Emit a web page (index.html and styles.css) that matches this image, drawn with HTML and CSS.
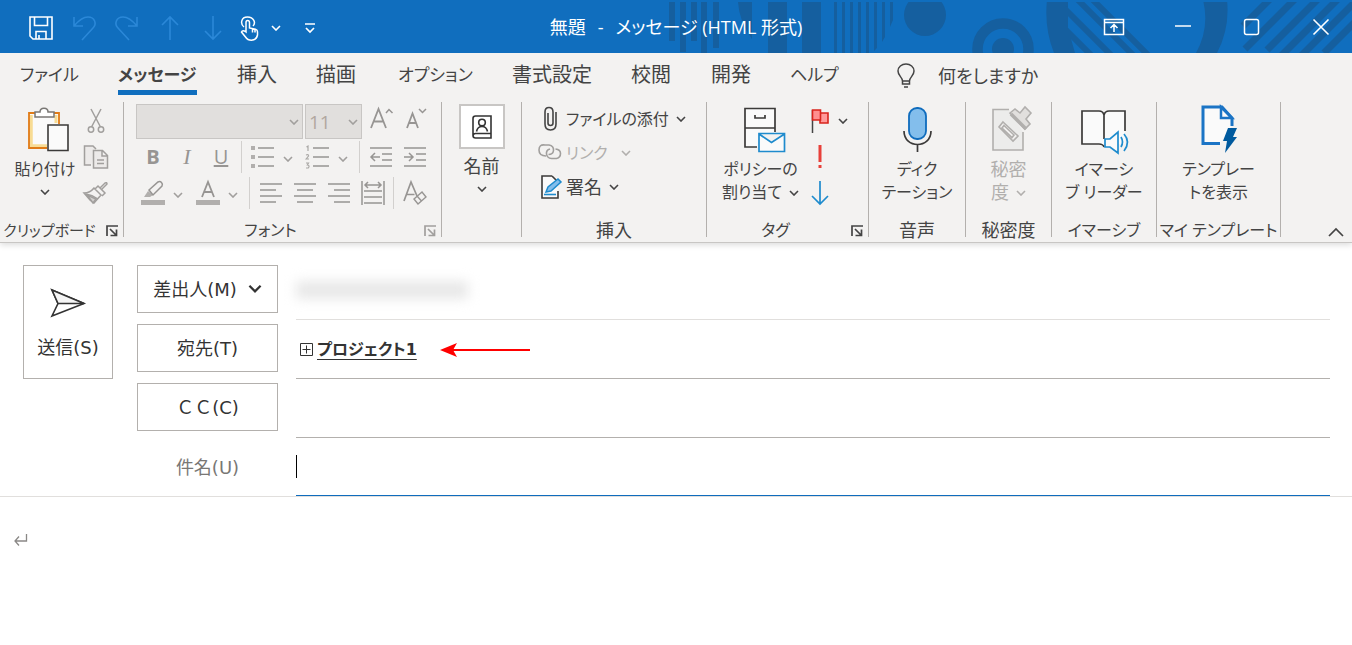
FILE: index.html
```html
<!DOCTYPE html>
<html lang="ja">
<head>
<meta charset="utf-8">
<title>無題 - メッセージ (HTML 形式)</title>
<link rel="stylesheet" href="styles.css">
</head>
<body>
<svg class="defs" aria-hidden="true">
  <symbol id="chev" viewBox="0 0 10 6"><path d="M1 1l4 4 4-4" fill="none" stroke="currentColor" stroke-width="1.600"/></symbol>
  <symbol id="launch" viewBox="0 0 12 12"><path d="M1 11V1h11M4 4l6 6M10.500 4.500v6h-6" fill="none" stroke="currentColor" stroke-width="1.700"/></symbol>
</svg>

<header class="titlebar">
  <svg class="pattern" viewBox="660 0 692 53" width="692" height="53" aria-hidden="true">
    <defs><clipPath id="bar"><path d="M660 2h692v51H660z"/></clipPath></defs>
    <g clip-path="url(#bar)" fill="#155f9f" stroke="none">
      <path d="M669 2h6v39h-6zM680 2h6v50h-6zM691 2h6v39h-6zM701 2h6v51h-6zM713 2h6v46h-6zM738 2h14v37q-13-18-14-37zM768 2h19v51h-19zM802 2h19v51h-19z"/>
      <path d="M834 2h3v51h-3zM842 2h3v51h-3zM850 2h3v51h-3zM858 2h3v51h-3zM866 2h3v51h-3zM874 2h3v46l-3 3zM882 2h3v35l-3 5zM890 2h3v18l-3 7z"/>
      <circle cx="925" cy="15" r="21"/>
      <circle cx="1003" cy="49" r="25.500" fill="none" stroke="#155f9f" stroke-width="10.500"/>
      <circle cx="1003" cy="49" r="11"/>
      <path d="M1047 0h21v28l7 25h-21q-10-25-7-53z"/>
      <path d="M1203 0q7 28-7 53h21q13-25 10-53z"/>
      <g fill="none" stroke="#155f9f" stroke-width="6">
        <path d="M1064 8l50 50M1074-4l60 60M1089-4l60 60M1066 30l28 28"/>
        <path d="M1273-4l-30 30M1298-4l-53 53M1321-4l-54 54M1341-4l-60 60M1364-7l-63 63M1374 3l-50 50" stroke-width="7"/>
      </g>
    </g>
  </svg>
  <div class="quick">
    <button aria-label="上書き保存"><svg width="26" height="26" viewBox="0 0 26 26" fill="none" stroke="#fff" stroke-width="1.600"><path d="M2 2h22v22H5l-3-3zM6.500 2v8.500h13V2M8 24v-7.500h10V24M11 20v4"/></svg></button>
    <button class="dim" aria-label="元に戻す"><svg width="26" height="26" viewBox="0 0 26 26" fill="none" stroke="currentColor" stroke-width="1.600"><path d="M3 2v9h9M3 11c5-6 9-9 14-9 7 0 9 7 5 11L11 25"/></svg></button>
    <button class="dim" aria-label="やり直し"><svg width="26" height="26" viewBox="0 0 26 26" fill="none" stroke="currentColor" stroke-width="1.600"><path d="M23 2v9h-9M23 11c-5-6-9-9-14-9-7 0-9 7-5 11l11 12"/></svg></button>
    <button class="dim" aria-label="前のアイテム"><svg width="26" height="26" viewBox="0 0 26 26" fill="none" stroke="currentColor" stroke-width="1.600"><path d="M13 25V2M5 10l8-8 8 8"/></svg></button>
    <button class="dim" aria-label="次のアイテム"><svg width="26" height="26" viewBox="0 0 26 26" fill="none" stroke="currentColor" stroke-width="1.600"><path d="M13 1v23M5 16l8 8 8-8"/></svg></button>
    <button class="touch" aria-label="タッチ/マウス モードの切り替え"><svg width="22" height="26" viewBox="0 0 22 26" fill="none" stroke="#fff" stroke-width="1.500"><path d="M5 12C1 9 2 2 8.500 2S17 8 14 11"/><path d="M7 17V7.500q0-2 1.700-2t1.800 2V13l6 1.200q2 .500 2 2.500v3.300q-1 5-6 5.200-4 0-6-3.200l-4-5q1-2.500 4.500 0zM13.500 13.500v4M16 14v3.500"/></svg><svg class="chev"><use href="#chev"/></svg></button>
    <button class="custom" aria-label="クイック アクセス ツール バーのユーザー設定"><svg width="12" height="12" viewBox="0 0 12 12" fill="none" stroke="#fff" stroke-width="1.700"><path d="M1 2h10M2 6l4 4 4-4"/></svg></button>
  </div>
  <h1 class="title"><span>無題</span><span>-</span><span>メッセージ (HTML 形式)</span></h1>
  <div class="winctl">
    <button aria-label="リボンの表示オプション"><svg width="22" height="18" viewBox="0 0 22 18" fill="none" stroke="#fff" stroke-width="1.500"><path d="M1.500 1.500h19v15h-19zM1.500 4.500h19M11 14V7M7.500 10L11 6.500 14.500 10"/></svg></button>
    <button aria-label="最小化"><svg width="18" height="18" viewBox="0 0 18 18" stroke="#fff" stroke-width="1.500"><path d="M1 8h16"/></svg></button>
    <button aria-label="最大化"><svg width="18" height="18" viewBox="0 0 18 18" fill="none" stroke="#fff" stroke-width="1.500"><rect x="1.500" y="1.500" width="14" height="15" rx="2"/></svg></button>
    <button aria-label="閉じる"><svg width="18" height="18" viewBox="0 0 18 18" stroke="#fff" stroke-width="1.600"><path d="M1.500 1.500l15 15M16.500 1.500l-15 15"/></svg></button>
  </div>
</header>

<nav class="tabs">
  <button class="kana">ファイル</button>
  <button class="kana active">メッセージ</button>
  <button>挿入</button>
  <button>描画</button>
  <button class="kana">オプション</button>
  <button>書式設定</button>
  <button>校閲</button>
  <button>開発</button>
  <button class="kana">ヘルプ</button>
  <button class="tell"><svg width="20" height="26" viewBox="0 0 20 26" fill="none" stroke="#444" stroke-width="1.500"><path d="M6.500 18c0-4-4.500-5-4.500-10a8 7 0 0 1 16 0c0 5-4.500 6-4.500 10zM6.500 18v3h7v-3M8 24h4"/></svg><span>何をしますか</span></button>
</nav>

<section class="ribbon">
  <div class="group">
    <div class="body clip">
      <button class="big paste">
        <svg class="pic" width="44" height="48" viewBox="-3 -1 44 48" fill="none"><path d="M3.500 7.500h29v34h-29z" fill="#fafafa"/><path d="M5 9v31h16" stroke="#f8dc94" stroke-width="3.500"/><path d="M30 9v8" stroke="#f8dc94" stroke-width="3"/><path d="M9 7H3v35h18M27 7h6v11" stroke="#e07b16" stroke-width="1.800"/><path d="M9 11V6h5c0-5 8-5 8 0h6v5z" fill="#fff" stroke="#797774" stroke-width="1.500"/><path d="M22 19h20v25.500H22z" fill="#fafafa" stroke="#3b3a39" stroke-width="1.600"/></svg>
        <span>貼り付け</span><svg class="chev"><use href="#chev"/></svg>
      </button>
      <div class="col off">
        <button aria-label="切り取り"><svg width="24" height="26" viewBox="0 0 24 26" fill="none" stroke="currentColor" stroke-width="1.500"><path d="M7 1l9.500 18M17 1L7.500 19"/><circle cx="7" cy="21.500" r="2.700"/><circle cx="17" cy="21.500" r="2.700"/></svg></button>
        <button aria-label="コピー"><svg width="26" height="26" viewBox="0 0 26 26" fill="#eceae9" stroke="currentColor" stroke-width="1.500"><path d="M8 21H1.500V2H10l3 3"/><path d="M10.500 6.500h9l5 5v12.500h-14zM19 6.500v5.500h5.500M14 16h7M14 19.500h7"/></svg></button>
        <button aria-label="書式のコピー"><svg width="26" height="24" viewBox="0 0 26 24" fill="none" stroke="currentColor" stroke-width="1.500"><path d="M11 7l7 7-7 8-4-3-6-7q6 0 10-5zM12 8l3-3 7 7-3 3M17 7l5-5q2-1 2 1l-5 5M3 13q6 1 12 5"/><path d="M4 14l9 4-3 4z" fill="#d2d0ce"/></svg></button>
      </div>
    </div>
    <div class="cap"><span class="tight">クリップボード</span><button class="launch" aria-label="クリップボードの設定"><svg><use href="#launch"/></svg></button></div>
  </div>

  <div class="group">
    <div class="body font off">
      <div class="row pick">
        <label class="sel family"><select disabled aria-label="フォント"><option></option></select><svg class="chev"><use href="#chev"/></svg></label>
        <label class="sel size"><select disabled aria-label="フォント サイズ"><option>11</option></select><svg class="chev"><use href="#chev"/></svg></label>
        <button class="ib" aria-label="フォント サイズの拡大"><svg width="26" height="26" viewBox="0 0 26 26" fill="none" stroke="#979593" stroke-width="1.800"><path d="M3 22L10.500 3 18 22M6 15.500h9"/><path d="M18 7l3-3.500L24.500 7" stroke-width="1.500"/></svg></button>
        <button class="ib" aria-label="フォント サイズの縮小"><svg width="26" height="26" viewBox="0 0 26 26" fill="none" stroke="#979593" stroke-width="1.800"><path d="M5 22l5.500-14.500L16 22M7 17h7"/><path d="M17 3l3.500 3.500L24 3" stroke-width="1.500"/></svg></button>
      </div>
      <div class="row">
        <button class="ib biu bold">B</button><button class="ib biu italic">I</button><button class="ib biu under">U</button>
        <i class="sep"></i>
        <span class="split"><button class="ib" aria-label="箇条書き"><svg width="24" height="24" viewBox="1 0 24 24" fill="none" stroke="#979593" stroke-width="1.500"><path d="M8 3h16M8 12h16M8 21h16"/><path d="M1 1h4v4H1zM1 10h4v4H1zM1 19h4v4H1z" fill="#b1afad" stroke="none"/></svg></button><button class="drop" aria-label="箇条書きの種類"><svg class="chev"><use href="#chev"/></svg></button></span>
        <span class="split"><button class="ib" aria-label="段落番号"><svg width="24" height="24" viewBox="1 0 24 24" fill="none" stroke="#979593" stroke-width="1.500"><path d="M8 3h16M8 12h16M8 21h16"/><path d="M1.500 2l1.500-1v5M1 10q3-1 2.500 1L1.200 14H4M1 18h2.500L2.300 20q3 .500 1 3H1" stroke="#aaa8a6" stroke-width="1.200"/></svg></button><button class="drop" aria-label="段落番号の種類"><svg class="chev"><use href="#chev"/></svg></button></span>
        <i class="sep"></i>
        <button class="ib" aria-label="インデントを減らす"><svg width="22" height="22" viewBox="0 0 22 22" fill="none" stroke="#979593" stroke-width="1.500"><path d="M0 2h22M12 8h10M12 14h10M0 20h22M1 11h9M5 7l-4 4 4 4"/></svg></button>
        <button class="ib" aria-label="インデントを増やす"><svg width="22" height="22" viewBox="0 0 22 22" fill="none" stroke="#979593" stroke-width="1.500"><path d="M0 2h22M12 8h10M12 14h10M0 20h22M0 11h9M5 7l4 4-4 4"/></svg></button>
      </div>
      <div class="row">
        <span class="split"><button class="ib" aria-label="蛍光ペンの色"><svg width="26" height="26" viewBox="0 0 26 26" fill="none" stroke="#979593" stroke-width="1.500"><path d="M1 20h24v5H1z" fill="#b1afad" stroke="none"/><path d="M4 17l4-6 5 4-3 2z" fill="#b1afad" stroke="none"/><path d="M9 10l9-8q2-1 3.500.500T22 6l-9 9z"/></svg></button><button class="drop" aria-label="蛍光ペンの色を選ぶ"><svg class="chev"><use href="#chev"/></svg></button></span>
        <span class="split"><button class="ib" aria-label="フォントの色"><svg width="26" height="26" viewBox="0 0 26 26" fill="none" stroke="#979593" stroke-width="1.800"><path d="M1 20h24v5H1z" fill="#b1afad" stroke="none"/><path d="M7 17l6-15 6 15M9 12h8"/></svg></button><button class="drop" aria-label="フォントの色を選ぶ"><svg class="chev"><use href="#chev"/></svg></button></span>
        <i class="sep"></i>
        <button class="ib" aria-label="左揃え"><svg width="22" height="22" viewBox="0 0 22 22" stroke="#979593" stroke-width="1.500"><path d="M0 2h22M0 8h16M0 14h22M0 20h16"/></svg></button>
        <button class="ib" aria-label="中央揃え"><svg width="22" height="22" viewBox="0 0 22 22" stroke="#979593" stroke-width="1.500"><path d="M0 2h22M3 8h16M0 14h22M3 20h16"/></svg></button>
        <button class="ib" aria-label="右揃え"><svg width="22" height="22" viewBox="0 0 22 22" stroke="#979593" stroke-width="1.500"><path d="M0 2h22M6 8h16M0 14h22M6 20h16"/></svg></button>
        <button class="ib" aria-label="均等割り付け"><svg width="24" height="26" viewBox="0 0 24 26" fill="none" stroke="#979593" stroke-width="1.500"><path d="M1 1v24M23 1v24M3 11h18M3 17h18M3 23h18M4 5h16M7 2L4 5l3 3M17 2l3 3-3 3"/></svg></button>
        <i class="sep"></i>
        <button class="ib" aria-label="書式のクリア"><svg width="26" height="26" viewBox="0 0 26 26" fill="none" stroke="#979593" stroke-width="1.700"><path d="M2 21L9 2l6 14M4.500 14.500h8"/><path d="M12 19l8-7 4 5-8 7zM15 16l4.500 5" stroke-width="1.400"/></svg></button>
      </div>
    </div>
    <div class="cap"><span>フォント</span><button class="launch pale" aria-label="フォントの設定"><svg><use href="#launch"/></svg></button></div>
  </div>

  <div class="group">
    <div class="body">
      <button class="big names">
        <span class="card"><svg width="22" height="26" viewBox="0 0 22 26" fill="none" stroke="#333" stroke-width="1.600"><path d="M20 19.500V2H4.500Q2 2 2 4.500v17Q2 24 4.500 24H20v-4.500H4.500Q2 19.500 2 22"/><circle cx="11" cy="8.500" r="3.300"/><path d="M5.500 17.500q1-5 5.500-5t5.500 5"/></svg></span>
        <span class="han">名前</span><svg class="chev"><use href="#chev"/></svg>
      </button>
    </div>
    <div class="cap"></div>
  </div>

  <div class="group">
    <div class="body list">
      <button><svg width="24" height="26" viewBox="0 0 24 26" fill="none" stroke="#444" stroke-width="1.600"><path d="M10 7v10q0 2.500 2.500 2.500T15 17V6q0-4.500-4-4.500T7 6v12q0 6 5.500 6T18 18V6"/></svg><span>ファイルの添付</span><svg class="chev"><use href="#chev"/></svg></button>
      <button class="faint"><svg width="24" height="20" viewBox="0 0 24 20" fill="none" stroke="#a19f9d" stroke-width="1.600"><path d="M8 13q-7 0-7-6t6-5h4q5 1 4.500 5.500-.500 4-5 4M12 6q-4 1-3.500 5 .500 4 5 4.500h5q4-1 4-5t-5-4.500"/></svg><span>リンク</span><svg class="chev gap"><use href="#chev"/></svg></button>
      <button><svg width="24" height="26" viewBox="0 0 24 26" fill="none"><path d="M4.500 2h9l6 6v15.500h-15z" fill="#fafafa"/><path d="M14 2H4v22h16v-7M14 2l5 5" stroke="#3b3a39" stroke-width="1.600"/><path d="M6 20.500h12" stroke="#1e8bcd" stroke-width="1.600"/><path d="M8 18l2-5L20 5l3 3L13 17z" fill="#83beec" stroke="#1e8bcd" stroke-width="1.500"/></svg><span class="han">署名</span><svg class="chev"><use href="#chev"/></svg></button>
    </div>
    <div class="cap"><span class="han">挿入</span></div>
  </div>

  <div class="group">
    <div class="body tags">
      <button class="big">
        <svg class="pic" width="44" height="48" viewBox="-3 1 44 48" fill="none" stroke="#3b3a39" stroke-width="1.700"><path d="M3 4.500h30V43H3z" fill="#fafafa" stroke="none"/><path d="M33 28V4.500H3V43h12M3 24h30M13 11v3h10v-3"/><path d="M16 29h27v19H16z" fill="#f3f2f1" stroke="none"/><path d="M17 29.500h25.500V47.500H17zM17 30l12.500 8.500L42.500 30" fill="#fafafa" stroke="#1e8bcd"/></svg>
        <span>ポリシーの</span><span class="line">割り当て<svg class="chev"><use href="#chev"/></svg></span>
      </button>
      <div class="col">
        <button class="flag" aria-label="フォローアップ"><svg width="20" height="26" viewBox="0 0 20 26"><path d="M2.500 2v23" stroke="#444" stroke-width="1.500"/><path d="M10 5h8v10h-8z" fill="#ff9a9a" stroke="#d9241c" stroke-width="1.600"/><path d="M2.500 2h8v10h-8z" fill="#ff8f8f" stroke="#d9241c" stroke-width="1.600"/></svg><svg class="chev"><use href="#chev"/></svg></button>
        <button aria-label="重要度 - 高"><svg width="20" height="26" viewBox="0 0 20 26" fill="#e8403a"><path d="M8.500 1h3v17h-3zM8.500 21h3v3h-3z"/></svg></button>
        <button aria-label="重要度 - 低"><svg width="20" height="26" viewBox="0 0 20 26" fill="none" stroke="#1e8bcd" stroke-width="1.700"><path d="M10 1v23M2 16l8 8 8-8"/></svg></button>
      </div>
    </div>
    <div class="cap"><span>タグ</span><button class="launch" aria-label="タグの設定"><svg><use href="#launch"/></svg></button></div>
  </div>

  <div class="group">
    <div class="body">
      <button class="big"><svg class="pic" width="44" height="48" viewBox="0 0 44 48" fill="none"><rect x="14" y="3" width="17" height="31" rx="8" fill="#83beec" stroke="#0f6cbd" stroke-width="1.800"/><path d="M9 26c0 18 27 18 27 0M22.500 39.500V47" stroke="#3b3a39" stroke-width="1.700"/></svg><span>ディク</span><span>テーション</span></button>
    </div>
    <div class="cap"><span class="han">音声</span></div>
  </div>

  <div class="group">
    <div class="body">
      <button class="big faint"><svg class="pic" width="44" height="48" viewBox="-1 0 44 48" fill="none" stroke="#b1afad" stroke-width="1.600"><path d="M21 4.500H5V45h30V27" fill="#ececeb"/><path d="M15 17l15 14-5 5-14-14zM16 20.500l10 9.500-2 2.500-10-9.500z" fill="#f3f2f1"/><path d="M22 8l5-4 5 4 5-6 6 6-5 6 4 5-5 5z" fill="#e1dfdd"/><path d="M23 9l15 15" stroke-width="3.500"/></svg><span class="han">秘密</span><span class="line han">度<svg class="chev"><use href="#chev"/></svg></span></button>
    </div>
    <div class="cap"><span class="han">秘密度</span></div>
  </div>

  <div class="group">
    <div class="body">
      <button class="big"><svg class="pic" width="48" height="48" viewBox="0 0 48 48" fill="none" stroke="#3b3a39" stroke-width="1.700"><path d="M24 42q-2-3-5-3H2V6h17q4 0 5 4 1-4 5-4h16v33h-16q-4 0-5 3z" fill="#fafafa" stroke="none"/><path d="M24 34V10q-1-4-5-4H2v33h17q4 0 5 3M24 10q1-4 5-4h16v20"/><path d="M25 34h5l8-7v21l-8-6h-5z" fill="#fafafa" stroke="#1e8bcd"/><path d="M41 32q3 5 0 10M44 29q7 8 0 17" stroke="#1e8bcd"/></svg><span>イマーシ</span><span>ブ リーダー</span></button>
    </div>
    <div class="cap"><span>イマーシブ</span></div>
  </div>

  <div class="group">
    <div class="body">
      <button class="big"><svg class="pic" width="44" height="48" viewBox="0 1 44 48" fill="none"><path d="M23 39.500H6V3h19l10 11v8" fill="#fafafa" stroke="#1b74c5" stroke-width="3"/><path d="M24 3v11h11z" stroke="#1b74c5" stroke-width="2.500"/><path d="M31 24h9l-4 9h4L28 49l2-12h-4z" fill="#005a9e"/></svg><span>テンプレー</span><span>トを表示</span></button>
    </div>
    <div class="cap"><span>マイ テンプレート</span></div>
  </div>

  <button class="fold" aria-label="リボンを折りたたむ"><svg width="16" height="10" viewBox="0 0 16 10" fill="none" stroke="#444" stroke-width="1.700"><path d="M1 9l7-7 7 7"/></svg></button>
</section>

<main>
  <form class="compose">
    <button type="button" class="send"><svg width="36" height="30" viewBox="0 0 36 30" fill="#f5f5f5" stroke="#333" stroke-width="1.600"><path d="M2 2l32 13.500L2 28l6-12.500z" fill="#fff"/><path d="M2 2l6 13.500h26z"/></svg><span>送信(S)</span></button>
    <div class="lines">
      <div class="field first"><button type="button" class="pill">差出人(M)<svg class="chev wide"><use href="#chev"/></svg></button><div class="value"><span class="masked" aria-label="差出人のアドレス"></span></div></div>
      <div class="field"><button type="button" class="pill">宛先(T)</button><div class="value">
        <svg width="13" height="13" viewBox="0 0 13 13" fill="none" stroke="#333"><path d="M.5.5h12v12H.5zM6.500 2.500v8M2.500 6.500h8"/></svg>
        <a class="to" href="#project">プロジェクト1</a>
        <svg class="arrow" width="92" height="16" viewBox="0 0 92 16"><path d="M14 9h77" stroke="#f00" stroke-width="2"/><path d="M1 9L18 2l-4 7 4 7z" fill="#f00"/></svg>
      </div></div>
      <div class="field"><button type="button" class="pill">ＣＣ(C)</button><div class="value"></div></div>
      <div class="field last"><label for="subject">件名(U)</label><div class="value"><i class="caret"></i><input id="subject" type="text"></div></div>
    </div>
  </form>
  <div class="message"><svg width="14" height="12" viewBox="0 0 14 12" fill="none" stroke="#8a8886" stroke-width="1.300"><path d="M12.500 0v7H1M5 2.500L1 7l4 4.500"/></svg></div>
</main>
</body>
</html>
```

FILE: styles.css
```css
* { box-sizing: border-box; }

body {
  margin: 0;
  background: #fff;
  color: #444;
  font-family: "Open Sans", "Noto Sans CJK JP", sans-serif;
  font-size: 16px;
  font-feature-settings: "palt";
}

button {
  margin: 0;
  padding: 0;
  border: 0;
  background: none;
  color: inherit;
  font: inherit;
  font-feature-settings: inherit;
}

svg { display: block; flex: none; overflow: visible; }
.defs { position: absolute; width: 0; height: 0; }
.chev { width: 10px; height: 6px; }
.han { font-size: 18px; }

/* Title bar */
.titlebar {
  position: relative;
  display: grid;
  grid-template-columns: 1fr auto 1fr;
  align-items: center;
  height: 53px;
  background: #106ebe;
  color: #fff;
}
.pattern { position: absolute; top: 0; right: 0; overflow: hidden; }
.quick, .title, .winctl { position: relative; }
.quick { display: flex; align-items: center; gap: 17px; padding: 3px 0 0 28px; }
.quick .dim { color: #2b88d8; }
.touch { display: flex; align-items: center; gap: 10px; margin-left: -4px; }
.custom { margin-left: 6px; }
.title {
  display: flex;
  gap: 12px;
  margin: 0;
  font-size: 18px;
  font-weight: 400;
  line-height: 24px;
  white-space: nowrap;
}
.winctl { display: flex; justify-content: flex-end; }
.winctl button { display: grid; place-items: center; width: 69px; height: 53px; }
.winctl button:last-child { width: 62px; margin-left: 4px; }

/* Tabs */
.tabs {
  position: relative;
  z-index: 1;
  display: grid;
  grid-template-columns: 98px 119px 79px 82px 114px 119px 80px 79px 106px 1fr;
  height: 49px;
  padding-left: 20px;
  background: #f3f2f1;
}
.tabs button {
  justify-self: start;
  align-self: start;
  height: 42px;
  font-size: 20px;
  line-height: 44px;
  text-align: left;
  white-space: nowrap;
}
.tabs .kana { font-size: 17px; }
.tabs .active { border-bottom: 5px solid #106ebe; font-weight: 700; }
.tabs .tell { display: flex; align-items: center; gap: 22px; height: 45px; font-size: 18px; }

/* Ribbon */
.ribbon {
  display: grid;
  grid-template-columns: 124px 318px 80px 185px 162px 97px 86px 105px 124px 1fr;
  padding-bottom: 5px;
  border-bottom: 1px solid #c8c6c4;
  background: #f3f2f1;
  box-shadow: 0 2px 6px #00000024;
}
.group {
  display: flex;
  flex-direction: column;
  justify-content: space-between;
  height: 135px;
  border-right: 1px solid #b3b0ad;
}
.body { display: flex; justify-content: center; }
.cap { display: flex; height: 14px; line-height: 14px; white-space: nowrap; }
.cap > span { flex: 1; text-align: center; }
.cap .tight { font-size: 15px; }
.launch { width: 24px; padding: 1px 5px 0 7px; }
.launch svg { width: 12px; height: 12px; }
.pale { color: #a19f9d; }

.big {
  display: flex;
  flex-direction: column;
  align-items: center;
  padding-top: 3px;
  line-height: 23px;
  white-space: nowrap;
}
.big .pic { margin-bottom: 5px; }
.big > .chev { margin-top: 8px; }
.big.names { padding-top: 2px; }
.line { display: flex; align-items: center; gap: 7px; }
.faint { color: #b1afad; }

.clip { justify-content: flex-start; gap: 7px; padding-left: 14px; }
.paste { width: 62px; }
.col { display: flex; flex-direction: column; padding-top: 1px; }
.col button { display: flex; align-items: center; justify-content: center; width: 26px; height: 36px; }
.off { color: #a19f9d; }

.font { flex-direction: column; padding: 2px 0 0 12px; }
.row { display: flex; align-items: center; height: 36px; }
.row.pick { align-items: flex-start; height: 35px; }
.sel { display: grid; align-items: center; margin-right: 2px; }
.sel > * { grid-area: 1 / 1; }
.sel .chev { justify-self: end; margin-right: 4px; }
.sel select {
  appearance: none;
  width: 100%;
  height: 35px;
  padding: 0 3px;
  border: 1px solid #c8c6c4;
  border-radius: 0;
  background: #e1dfdd;
  color: #b1a79f;
  font: inherit;
  font-size: 19px;
  opacity: 1;
}
.family { width: 167px; }
.size { width: 57px; }
.ib { display: grid; place-items: center; width: 34px; height: 30px; }
.biu { color: #979593; font-size: 20px; line-height: 28px; }
.bold { font-weight: 700; }
.italic { font-family: "Liberation Serif", serif; font-style: italic; font-size: 22px; }
.under { text-decoration: underline; }
.split { display: flex; align-items: center; margin-right: 5px; }
.drop { display: grid; place-items: center; width: 16px; height: 30px; padding-top: 4px; }
.sep { width: 1px; height: 32px; margin: 0 4px 0 3px; background: #d2d0ce; }

.card {
  display: grid;
  place-items: center;
  width: 46px;
  height: 45px;
  margin-bottom: 6px;
  border: 2px solid #c8c6c4;
  background: #fff;
}

.list { flex-direction: column; padding-left: 16px; }
.list button { display: flex; align-items: center; gap: 4px; height: 34px; line-height: 24px; white-space: nowrap; }
.list .chev { margin-left: 3px; }
.list .gap { margin-left: 9px; }

.tags { justify-content: flex-start; gap: 11px; padding-left: 15px; }
.tags .col button { width: 40px; justify-content: flex-start; gap: 8px; }
.fold { align-self: end; justify-self: end; padding: 0 8px 0 0; }

/* Message header */
.compose {
  display: grid;
  grid-template-columns: 90px 1fr;
  gap: 24px;
  padding: 18px 22px 0 23px;
  border-bottom: 1px solid #e1dfdd;
  color: #333;
  font-family: "DejaVu Sans", "Noto Sans CJK JP", sans-serif;
  font-size: 18px;
  font-feature-settings: normal;
}
.send {
  display: flex;
  flex-direction: column;
  align-items: center;
  justify-content: center;
  gap: 18px;
  height: 114px;
  margin-top: 4px;
  padding-top: 4px;
  border: 1px solid #b3b0ad;
  line-height: 24px;
}
.field { display: grid; grid-template-columns: 141px 1fr; gap: 18px; height: 59px; }
.pill {
  display: flex;
  align-items: center;
  justify-content: center;
  gap: 11px;
  height: 48px;
  margin-top: 4px;
  padding-bottom: 2px;
  border: 1px solid #b3b0ad;
}
.wide { width: 14px; height: 9px; }
.value { display: flex; align-items: center; border-bottom: 1px solid #b3b0ad; }
.first .value { border-color: #e1dfdd; }
.last { height: 58px; }
.last label { align-self: center; padding-bottom: 3px; color: #797775; text-align: center; }
.last .value { border-color: #0f6cbd; }
.masked {
  width: 172px;
  height: 18px;
  background: #e8e8e8;
  filter: blur(6px);
}
.value > svg:first-child { margin-left: 4px; }
.to {
  margin-left: 4px;
  padding-bottom: 3px;
  color: #333;
  font-size: 16px;
  font-weight: 700;
  font-feature-settings: "palt";
  text-underline-offset: 4px;
}
.value .arrow { margin-left: 22px; }
.caret { width: 1px; height: 23px; background: #000; }
.caret + input { flex: 1; height: 40px; border: 0; outline: 0; background: none; font: inherit; }

.message { padding: 37px 14px; }
```
